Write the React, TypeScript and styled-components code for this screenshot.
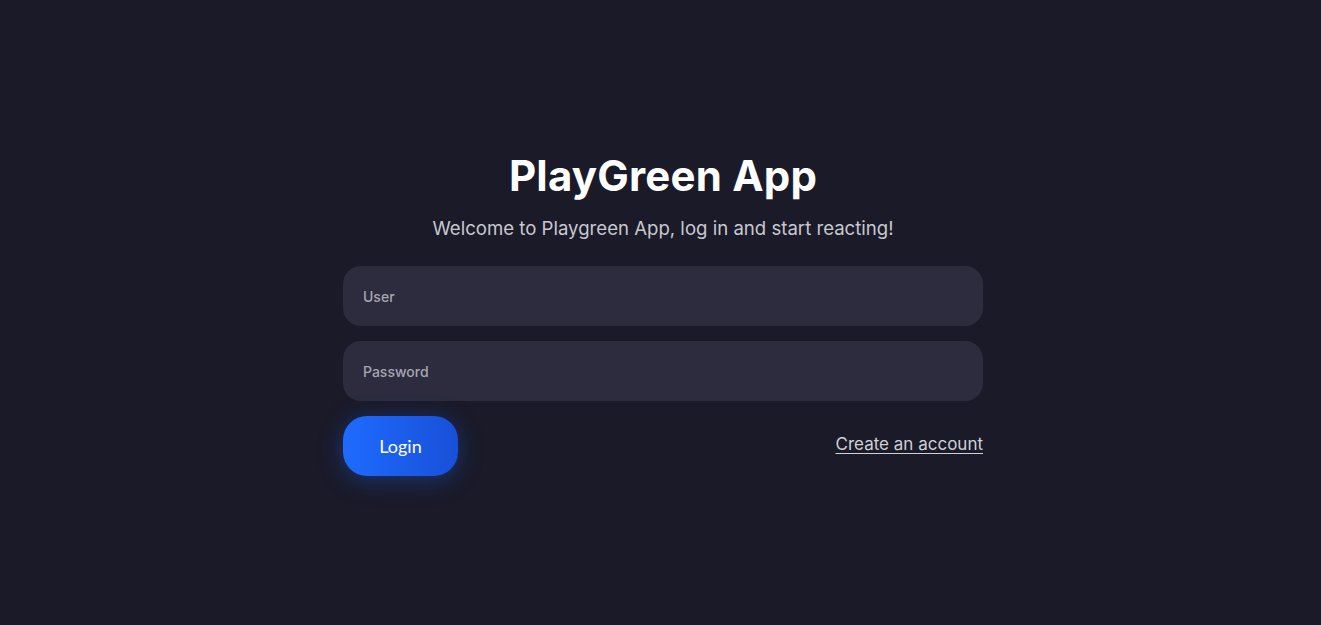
import React, { FC } from 'react';
import styled, { createGlobalStyle } from 'styled-components';

const GlobalStyle = createGlobalStyle`
    html, body {
        margin: 0;
        padding: 0;
        background: #1a1a28;
    }
    * {
        box-sizing: border-box;
    }
`;

const Page = styled.main`
    min-height: 625px;
    display: flex;
    justify-content: center;
    padding: 150px 0 0 5px;
    font-family: 'Inter', 'Noto Sans', sans-serif;
`;

const Card = styled.div`
    width: 640px;
    display: flex;
    flex-direction: column;
    align-items: center;
`;

const Title = styled.h1`
    margin: 0;
    font-size: 42px;
    line-height: 52px;
    font-weight: 700;
    color: #ffffff;
    letter-spacing: 0.2px;
`;

const Subtitle = styled.p`
    margin: 14px 0 26px;
    font-size: 18.6px;
    line-height: 24px;
    color: #c8c8d0;
`;

const Form = styled.form`
    width: 100%;
    display: flex;
    flex-direction: column;
    gap: 15px;
`;

const Input = styled.input`
    width: 100%;
    height: 60px;
    border: none;
    outline: none;
    border-radius: 18px;
    background: #2c2c3e;
    padding: 0 20px;
    font-family: inherit;
    font-size: 14px;
    font-weight: 500;
    color: #ffffff;
    &::placeholder {
        color: #a6a6b2;
    }
`;

const Actions = styled.div`
    display: flex;
    align-items: center;
    justify-content: space-between;
`;

const LoginButton = styled.button`
    width: 115px;
    height: 60px;
    border: none;
    border-radius: 24px;
    background: linear-gradient(90deg, #1e6bff 0%, #1850d8 100%);
    box-shadow: 0 4px 24px rgba(30, 100, 255, 0.35);
    color: #ffffff;
    font-family: 'Lato', sans-serif;
    font-size: 18px;
    cursor: pointer;
`;

const AccountLink = styled.a`
    color: #d0d0d8;
    font-size: 17px;
    text-decoration: underline;
    text-underline-offset: 3px;
    margin-top: -4px;
`;

const App: FC = () => (
    <>
        <GlobalStyle />
        <Page>
            <Card>
                <Title>PlayGreen App</Title>
                <Subtitle>Welcome to Playgreen App, log in and start reacting!</Subtitle>
                <Form onSubmit={ e => e.preventDefault() }>
                    <Input placeholder='User' />
                    <Input type='password' placeholder='Password' />
                    <Actions>
                        <LoginButton type='submit'>Login</LoginButton>
                        <AccountLink href='#'>Create an account</AccountLink>
                    </Actions>
                </Form>
            </Card>
        </Page>
    </>
);

export default App;
